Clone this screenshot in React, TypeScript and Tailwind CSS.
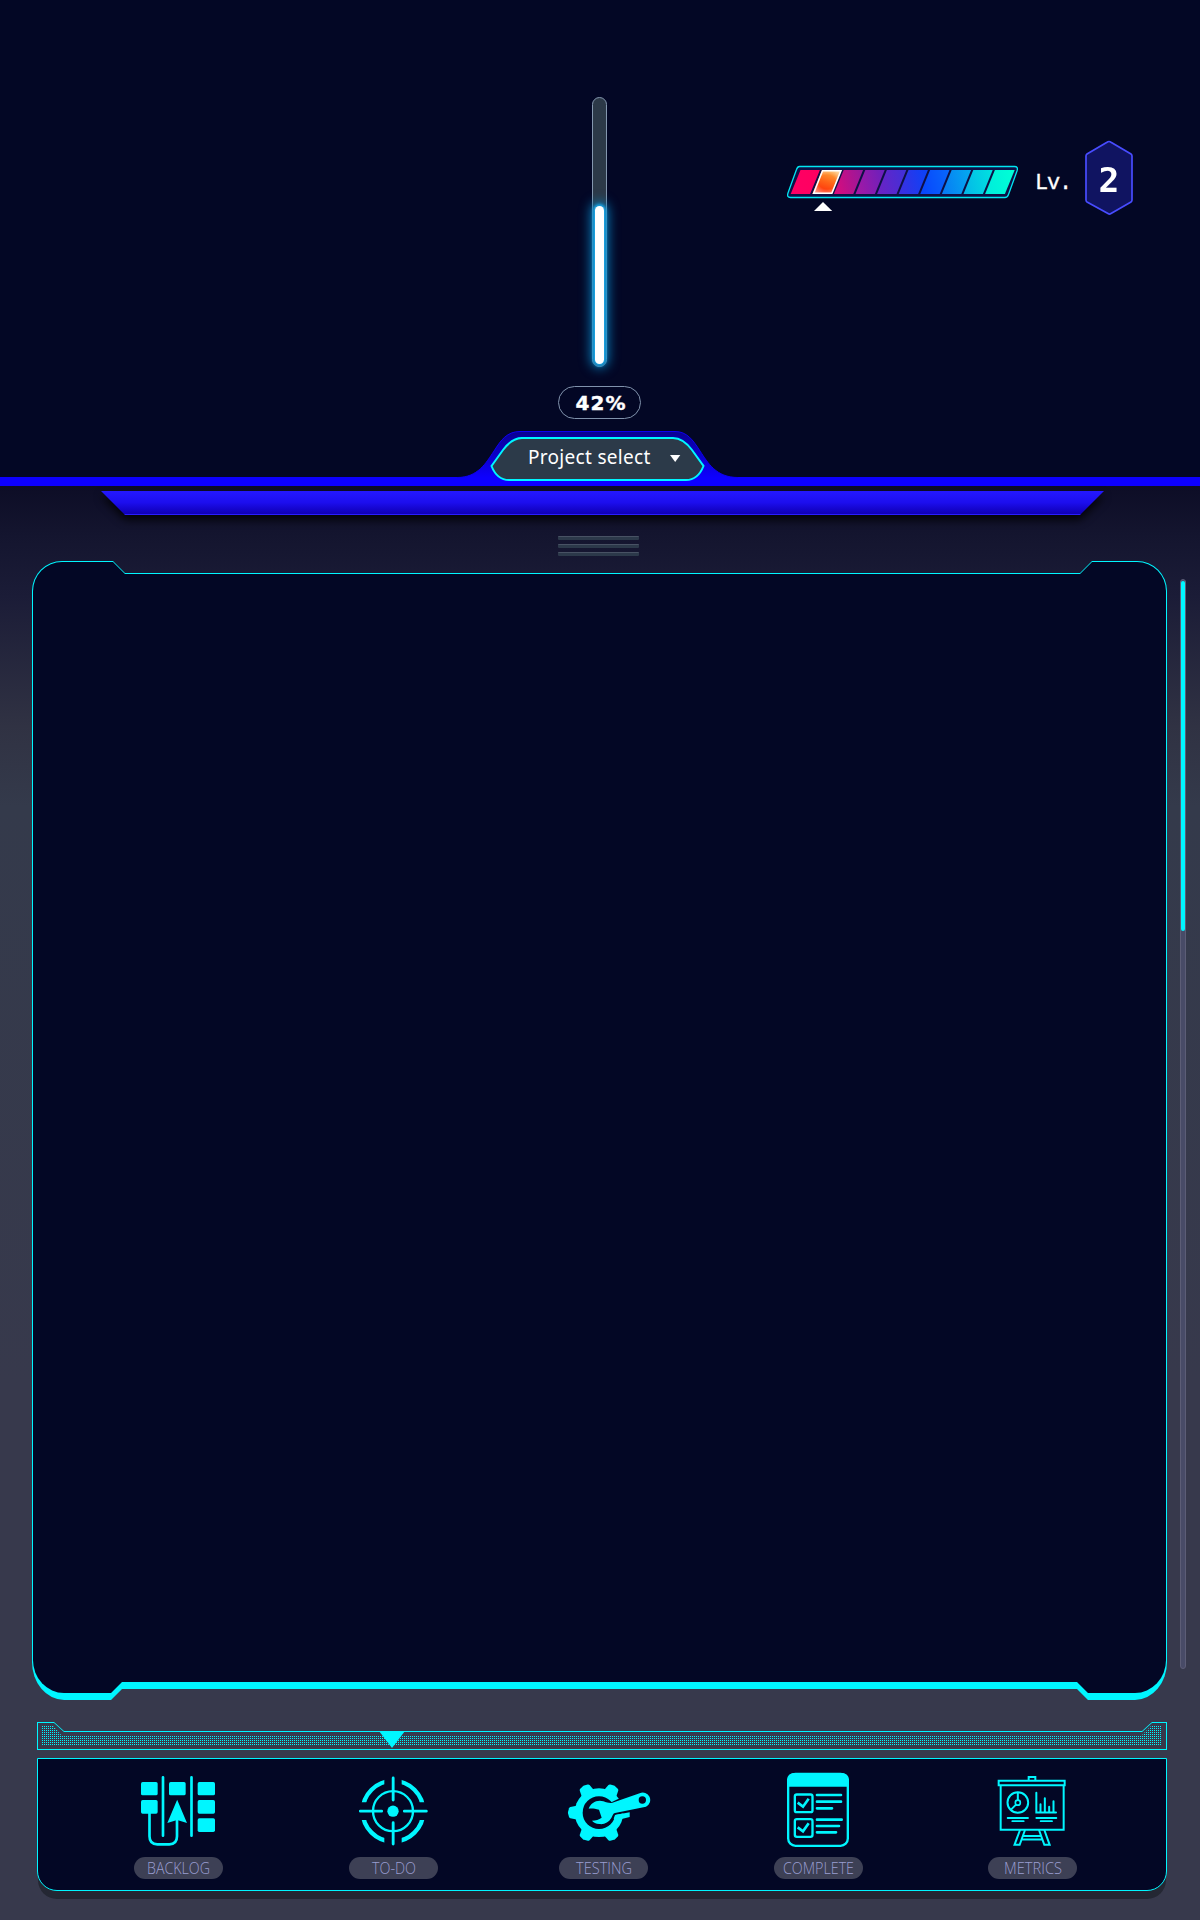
import React from "react";

const CYAN = "#00f6ff";

const ramp = [
  ["#ff0064", "#ff0060"],
  ["#ff3a10", "#ff9a30"],
  ["#d80c7c", "#98189c"],
  ["#a318a4", "#6c20bc"],
  ["#6b22c4", "#4230d8"],
  ["#3a30e0", "#0c42f8"],
  ["#0846fc", "#0866fc"],
  ["#087cf4", "#04a8f0"],
  ["#04b8e8", "#00e0e0"],
  ["#00ecdc", "#00ffd6"],
];

function LevelGauge() {
  return (
    <svg className="block" width="234" height="52" viewBox="785 163 234 52">
      <defs>
        {ramp.map((c, i) => (
          <linearGradient key={i} id={"seg" + i} x1="0" y1="0.6" x2="1" y2="0.4">
            <stop offset="0" stopColor={c[0]} />
            <stop offset="1" stopColor={c[1]} />
          </linearGradient>
        ))}
        <linearGradient id="hot" x1="0.3" y1="1" x2="0.7" y2="0">
          <stop offset="0" stopColor="#ff2c08" />
          <stop offset="0.5" stopColor="#ff6418" />
          <stop offset="1" stopColor="#ffa83c" />
        </linearGradient>
        <radialGradient id="halo" cx="0.5" cy="0.5" r="0.7">
          <stop offset="0.45" stopColor="#fff" stopOpacity="0" />
          <stop offset="1" stopColor="#fff" stopOpacity="0.7" />
        </radialGradient>
      </defs>
      <path
        d="M799.500 166.500H1014.500Q1018.500 166.500 1017 171L1008.500 194.500Q1007.500 197.500 1005 197.500H790.500Q786.500 197.500 788 193L796.500 169.500Q797.500 166.500 799.500 166.500Z"
        fill="#0e1046"
        stroke="#00e6f2"
        strokeWidth="1.300"
      />
      {ramp.map((_, i) => {
        const x = 790.7 + i * 21.6;
        const w = i === 9 ? 19.8 : 19.4;
        return (
          <path
            key={i}
            d={`M${x} 194L${x + 9.8} 170H${x + w + 9.8}L${x + w} 194Z`}
            fill={`url(#seg${i})`}
          />
        );
      })}
      <path d="M813.600 193.200L822.500 170.800H840.900L831.900 193.200Z" fill="url(#hot)" />
      <path d="M813.600 193.200L822.500 170.800H840.900L831.900 193.200Z" fill="url(#halo)" stroke="#fff" strokeWidth="1.600" />
      <path d="M814 211L823 202L832.200 211Z" fill="#fff" />
    </svg>
  );
}

function LevelBadge() {
  return (
    <div className="relative flex h-[75px] w-[48px] items-center justify-center">
      <svg className="absolute inset-0" width="48" height="75" viewBox="0 0 48 75">
        <path
          d="M24 1.500Q25 1.500 26 2.200L46 14Q47 14.700 47 16V60Q47 61.300 46 61.900L26 73.600Q24.500 74.500 23 73.600L2 61.900Q1 61.300 1 60V16Q1 14.700 2 14L22 2.200Q23 1.500 24 1.500Z"
          fill="#101461"
          stroke="#484cff"
          strokeWidth="1.700"
        />
      </svg>
      <span className="relative mt-[5px] scale-x-105 font-['DejaVu_Sans_Mono',monospace] text-[33px] font-bold leading-none text-white">2</span>
    </div>
  );
}

function ProgressColumn() {
  return (
    <div className="flex w-[83px] flex-col items-center pt-[97px]">
      <div className="flex h-[270px] w-[15px] items-end justify-center rounded-full border border-[#8497af] bg-[#2c3948] pb-[2px]">
        <div className="h-[158px] w-[9px] rounded-full bg-white shadow-[0_0_3px_2px_#1ba6e6,0_0_12px_4px_#067fbd]" />
      </div>
      <div className="mt-[19px] flex h-[33px] w-full items-center justify-center rounded-full border border-[#8092ac] font-['DejaVu_Sans',sans-serif] text-[20px] font-bold leading-none tracking-[1px] text-white">
        <span className="ml-[3px] mt-[1px] [-webkit-text-stroke:0.4px_white]">42%</span>
      </div>
    </div>
  );
}

function ProjectTab() {
  return (
    <div className="relative z-10 flex h-[46px] justify-center">
      <div className="relative mr-[6px] h-[55px] w-[290px]">
        <svg className="absolute inset-0" width="290" height="55" viewBox="452 431 290 55">
          <defs>
            <linearGradient id="tab" x1="0" y1="0" x2="0" y2="1">
              <stop offset="0" stopColor="#0a0091" />
              <stop offset="0.85" stopColor="#0d00ff" />
            </linearGradient>
          </defs>
          <path
            d="M457 477.500C478 477.500 486 463 494 451C501 440 507 431.500 520 431.500H675C687 431.500 693 440 700 451C708 463 716 477.500 738 477.500V486H457Z"
            fill="url(#tab)"
          />
          <path
            d="M457 477.500C478 477.500 486 463 494 451C501 440 507 431.500 520 431.500H675C687 431.500 693 440 700 451C708 463 716 477.500 738 477.500"
            fill="none"
            stroke="#0d00f0"
          />
          <path
            d="M491.500 466L503 450Q512 438 522 438H673Q683 438 692 450L703.500 466Q698 480 686 480H509Q497 480 491.500 466Z"
            fill="#2c3a49"
            stroke={CYAN}
            strokeWidth="2"
          />
          <path d="M670 455H680.300L675.200 462Z" fill="#fff" />
        </svg>
        <button className="relative ml-[76px] mt-[14px] block w-[130px] whitespace-nowrap text-left font-['Noto_Sans',sans-serif] text-[19px] leading-[25px] tracking-[0.300px] text-white">
          Project select
        </button>
      </div>
    </div>
  );
}

function BacklogIcon() {
  return (
    <svg width="76" height="72" viewBox="60 45 228 216" fill={CYAN}>
      <rect x="63" y="66" width="50" height="40" rx="5" />
      <rect x="63" y="120" width="50" height="41" rx="5" />
      <rect x="147" y="66" width="50" height="40" rx="5" />
      <rect x="233" y="66" width="52" height="40" rx="5" />
      <rect x="233" y="120" width="52" height="41" rx="5" />
      <rect x="233" y="175" width="52" height="41" rx="5" />
      <path
        d="M129 52V227M214.500 52V227M88.500 160V229Q88.500 253 112 253H148Q171 253 171 229V175"
        fill="none"
        stroke={CYAN}
        strokeWidth="8"
        strokeLinecap="round"
      />
      <path d="M171.500 119L201 189L171.500 180L142 189Z" />
    </svg>
  );
}

function TodoIcon() {
  return (
    <svg width="70" height="72" viewBox="713 45 210 216" fill="none" stroke={CYAN}>
      <defs>
        <clipPath id="quad">
          <path d="M713 50H792V127H713ZM844 50H923V127H844ZM713 180H792V256H713ZM844 180H923V256H844Z" />
        </clipPath>
      </defs>
      <circle cx="818" cy="153.500" r="60" strokeWidth="7" />
      <circle cx="818" cy="153.500" r="17" fill={CYAN} stroke="none" />
      <circle cx="818" cy="153.500" r="91" strokeWidth="13" clipPath="url(#quad)" />
      <path d="M818.500 54V120M818.500 188V252M720 153.500H784M852 153.500H918" strokeWidth="8.500" strokeLinecap="round" />
    </svg>
  );
}

const WRENCH =
  "M147 146C153 129 172 118 191 124C201 127 208 130 216 129L300 100A21.500 21.500 0 0 1 319 140L226 159C220 160 219 167 215 174C207 188 193 194 179 192C169 191 161 188 157 182C168 182 178 178 186 173L178 149C166 146 158 145 147 146Z";

function TestingIcon() {
  return (
    <svg width="84" height="72" viewBox="82 45 252 216" fill={CYAN}>
      {[0, 120, 180, 240, 300].map((a) => (
        <path
          key={a}
          d="M156 98L161 72Q162 69 165 68L176 65Q178 64.500 180 65L191 68Q194 69 195 72L200 98Z"
          transform={`rotate(${a + 30} 178 158)`}
        />
      ))}
      <circle cx="178" cy="158" r="73" />
      <circle cx="178" cy="158" r="49" fill="#030725" />
      <path d="M215 127L265 103L300 110V151L215 167Z" fill="#030725" />
      <path d="M226 165L270 157V171L246 177H222Z" />
      <path d={WRENCH} />
      <circle cx="308" cy="120" r="11" fill="#030725" />
    </svg>
  );
}

function CompleteIcon() {
  return (
    <svg width="64" height="76" viewBox="738 36 192 228" fill="none" stroke={CYAN}>
      <rect x="744.500" y="42" width="179" height="215.500" rx="22" strokeWidth="7" />
      <path d="M741 80V62Q741 39 764 39H904Q927 39 927 62V80Z" fill={CYAN} stroke="none" />
      <rect x="764.500" y="103.500" width="53" height="53" rx="6" strokeWidth="7" />
      <rect x="764.500" y="177.500" width="53" height="53" rx="6" strokeWidth="7" />
      <path d="M773 128L789 140L806 116M773 202L789 214L806 190" strokeWidth="8" />
      <path
        d="M831 105H903M831 125H903M831 145H876M831 179H905M831 198H897M831 217H888"
        strokeWidth="8"
        strokeLinecap="round"
      />
    </svg>
  );
}

function MetricsIcon() {
  return (
    <svg width="72" height="74" viewBox="46 402 216 222" fill="none" stroke={CYAN} strokeWidth="6">
      <path d="M144 422V411H164V422M54 422.500H252V436H54ZM60 436V569.500H249V436" />
      <circle cx="111.500" cy="487.500" r="31" />
      <circle cx="111.500" cy="488" r="7.500" strokeWidth="5" />
      <path d="M111.500 458V480M106 494L91 509" />
      <path d="M167 458V517.500H226M179.500 517V493M192.500 517V475M205.500 517V500M218.500 517V484" strokeLinecap="round" />
      <path d="M81 534H142M95 543.500H129M167 534H227M180 543.500H214" strokeWidth="5.500" strokeLinecap="round" />
      <path d="M118 570L101.500 614.500H117L133 570M175 570L191 614.500H207L191 570M128 588H181M123 598.500H185" strokeWidth="6" />
    </svg>
  );
}

function NavItem({
  label,
  width,
  offset,
  children,
}: {
  label: string;
  width: number;
  offset: string;
  children: React.ReactNode;
}) {
  return (
    <div className={"flex w-[89px] shrink-0 flex-col items-center " + offset}>
      <div className="flex h-[98px] items-start justify-center">{children}</div>
      <div className="flex h-[22px] w-[89px] items-center justify-center rounded-full bg-[#3d4055]">
        <svg className="block overflow-visible" width={width} height="22">
          <text
            x="0"
            y="16.500"
            textLength={width}
            lengthAdjust="spacingAndGlyphs"
            fill="#9a9ed2"
            className="font-['Open_Sans','Noto_Sans',sans-serif] text-[16px] font-light"
          >
            {label}
          </text>
        </svg>
      </div>
    </div>
  );
}

export default function App() {
  return (
    <div className="flex h-[1920px] w-[1200px] flex-col overflow-hidden bg-[#030725]">
      <header className="flex h-[431px] pl-[558px]">
        <ProgressColumn />
        <div className="ml-[144px] flex items-start pt-[140px]">
          <div className="pt-[23px]">
            <LevelGauge />
          </div>
          <div className="ml-[16px] mt-[32px] w-[36px] font-['Liberation_Mono',monospace] text-[22px] leading-[24px] tracking-[-1.200px] text-white [-webkit-text-stroke:0.3px_white]">
            Lv.
          </div>
          <div className="ml-[14px]">
            <LevelBadge />
          </div>
        </div>
      </header>
      <ProjectTab />
      <div className="h-[9px] shrink-0 bg-[#0d00ff]" />

      <main className="flex h-[1434px] flex-col bg-[linear-gradient(180deg,#0d0d26_0px,#14152f_50px,#1b1c37_110px,#303243_240px,#343a4b_320px,#37394c_900px)] pt-[5px]">
        <div className="ml-[101px] w-[1003px] drop-shadow-[0_5px_4px_rgba(0,0,0,0.8)]">
          <div className="h-[24px] border-b border-[#2a1cff] bg-gradient-to-b from-[#2418ff] via-[#1c0eee] to-[#0f00b4] [clip-path:polygon(0_0,100%_0,979px_100%,24px_100%)]" />
        </div>

        <div className="ml-[558px] mt-[21px] flex w-[81px] flex-col gap-[4px]">
          <div className="h-[4px] rounded-[1px] border-t border-[#485264] bg-[#2c394a]" />
          <div className="h-[4px] rounded-[1px] border-t border-[#485264] bg-[#2c394a]" />
          <div className="h-[4px] rounded-[1px] border-t border-[#485264] bg-[#2c394a]" />
        </div>

        <div className="mt-[5px] flex">
          <section className="ml-[32px] h-[1139px] w-[1135px] rounded-[30px_30px_32px_32px/30px_30px_38px_38px] bg-[#00f6ff] pl-px pt-px [clip-path:polygon(0_0,81px_0,93px_12px,1048px_12px,1060px_0,100%_0,100%_100%,1056px_100%,1045px_1128px,90px_1128px,79px_100%,0_100%)]">
            <div className="h-[1131px] w-[1133px] rounded-[29px_29px_31px_31px/29px_29px_33px_33px] bg-[#030725] [clip-path:polygon(0_0,80px_0,92px_12px,1047px_12px,1059px_0,100%_0,100%_100%,1055px_100%,1044px_1120px,89px_1120px,78px_100%,0_100%)]" />
          </section>
          <div className="ml-[13px] mt-[18px] h-[1090px] w-[6px] rounded-full border border-[#5c5d76] bg-[#484b67] pt-px">
            <div className="h-[350px] rounded-full bg-[#00f6ff]" />
          </div>
        </div>

        <div className="ml-[37px] mt-[22px] h-[28px] w-[1130px] shrink-0 bg-[#00f6ff] p-px [clip-path:polygon(0_0,17px_0,27px_9px,1105px_9px,1115px_0,100%_0,100%_100%,0_100%)]">
          <div className="h-[26px] bg-[#37394c] px-[4px] pt-[3px] [clip-path:polygon(0_0,16px_0,26px_9px,1104px_9px,1114px_0,100%_0,100%_100%,0_100%)]">
            <div className="h-[19px] [background-image:linear-gradient(90deg,transparent_50%,#37394c_50%),linear-gradient(#00f6ff_50%,#37394c_50%)] [background-size:2px_2px] [clip-path:polygon(0_0,11px_0,20px_10px,1099px_10px,1109px_0,100%_0,100%_100%,0_100%)]" />
          </div>
        </div>
        <div className="relative z-10 -mt-[19px] ml-[379px] h-[17px] w-[26px] bg-[#00f6ff] [clip-path:polygon(0_0,100%_0,50%_100%)]" />

        <nav className="ml-[37px] mt-[10px] flex h-[133px] w-[1130px] shrink-0 rounded-b-[20px] border border-[#00f6ff] bg-[#030725] shadow-[0_9px_0_-1px_#242733]">
          <NavItem label="BACKLOG" width={63} offset="ml-[96px]">
            <div className="mr-[2px] mt-[16px]"><BacklogIcon /></div>
          </NavItem>
          <NavItem label="TO-DO" width={44} offset="ml-[126px]">
            <div className="mr-[2px] mt-[16px]"><TodoIcon /></div>
          </NavItem>
          <NavItem label="TESTING" width={56} offset="ml-[121px]">
            <div className="ml-[10px] mt-[16px]"><TestingIcon /></div>
          </NavItem>
          <NavItem label="COMPLETE" width={71} offset="ml-[126px]">
            <div className="mr-[1px] mt-[13px]"><CompleteIcon /></div>
          </NavItem>
          <NavItem label="METRICS" width={58} offset="ml-[125px]">
            <div className="mr-[2px] mt-[15px]"><MetricsIcon /></div>
          </NavItem>
        </nav>
      </main>
    </div>
  );
}
